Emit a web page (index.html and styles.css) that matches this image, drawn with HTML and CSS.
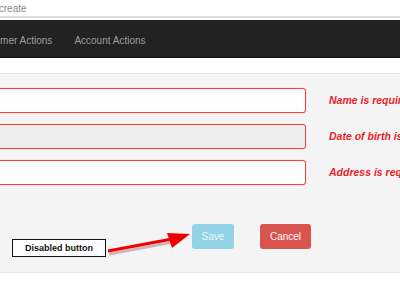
FILE: index.html
```html
<!DOCTYPE html>
<html lang="en">
<head>
  <meta charset="UTF-8">
  <meta name="viewport" content="width=device-width, initial-scale=1.0">
  <title>Customer create</title>
  <link rel="stylesheet" href="styles.css">
</head>
<body>
  <div class="address-bar">/create</div>

  <div class="navbar">
    <ul class="nav">
      <li>Customer Actions</li>
      <li>Account Actions</li>
    </ul>
  </div>

  <div class="panel">
    <form class="form">
      <div class="form-row">
        <input type="text" class="input-field">
        <span class="error">Name is required</span>
      </div>
      <div class="form-row">
        <input type="text" class="input-field disabled" disabled>
        <span class="error">Date of birth is required</span>
      </div>
      <div class="form-row">
        <input type="text" class="input-field">
        <span class="error">Address is required</span>
      </div>

      <div class="actions">
        <button type="button" class="button save" disabled>Save</button>
        <button type="button" class="button cancel">Cancel</button>
      </div>
    </form>

    <div class="note">Disabled button</div>
    <svg class="arrow" width="200" height="40" viewBox="0 0 200 40">
      <line x1="108" y1="19" x2="172" y2="7" stroke="#5a0000" stroke-width="3" opacity="0.25" transform="translate(1,2)"/>
      <line x1="108" y1="18" x2="172" y2="6" stroke="#f20000" stroke-width="3"/>
      <polygon points="190,1 167,0 172,15" fill="#f20000"/>
    </svg>
  </div>
</body>
</html>
```

FILE: styles.css
```css
body {
  margin: 0;
  padding: 0;
  font-family: "Liberation Sans", Arial, sans-serif;
  background-color: white;
  overflow: hidden;
}

.address-bar {
  height: 16px;
  line-height: 17px;
  font-size: 10px;
  color: #888;
  margin-left: -4px;
  border-bottom: 2px solid #dcdcdc;
}

.navbar {
  margin-top: 2px;
  height: 37px;
  background-color: #222;
  border-bottom: 1px solid #111;
}

.nav {
  margin: 0;
  padding: 2px 0 0;
  list-style: none;
  display: flex;
  margin-left: -37px;
}

.nav li {
  padding: 0 11px;
  line-height: 37px;
  font-size: 10px;
  color: #9d9d9d;
}

.panel {
  position: relative;
  margin-top: 15px;
  height: 198px;
  background-color: #f4f4f4;
  border-top: 1px solid #e4e4e4;
  border-bottom: 1px solid #e8e8e8;
}

.form {
  padding-top: 14px;
  display: flex;
  flex-direction: column;
  gap: 11.5px;
}

.form-row {
  display: flex;
  align-items: center;
}

.input-field {
  flex-shrink: 0;
  margin: 0 0 0 -10px;
  width: 316px;
  height: 24.5px;
  box-sizing: border-box;
  border: 1px solid #ff3b3b;
  border-radius: 3px;
  background-color: white;
  box-shadow: 0 0 1px rgba(255, 60, 60, 0.5);
}

.input-field.disabled {
  background-color: #eeeeee;
}

.error {
  margin-left: 23px;
  font-size: 10.5px;
  font-weight: bold;
  font-style: italic;
  color: #e8232b;
  white-space: nowrap;
}

.actions {
  display: flex;
  margin-top: 28px;
  margin-left: 192px;
  gap: 26px;
}

.button {
  height: 25px;
  padding: 0;
  border: none;
  border-radius: 3px;
  font-family: inherit;
  font-size: 10px;
  color: white;
}

.button.save {
  width: 42px;
  background-color: #93d3e6;
  color: #eef8fb;
}

.button.cancel {
  width: 51px;
  background-color: #d9534f;
}

.note {
  position: absolute;
  left: 12px;
  top: 165px;
  width: 92px;
  height: 16px;
  border: 1.5px solid #111;
  background-color: white;
  font-size: 9px;
  font-weight: bold;
  color: #111;
  text-align: center;
  line-height: 16px;
}

.arrow {
  position: absolute;
  left: 0;
  top: 159px;
}
```
